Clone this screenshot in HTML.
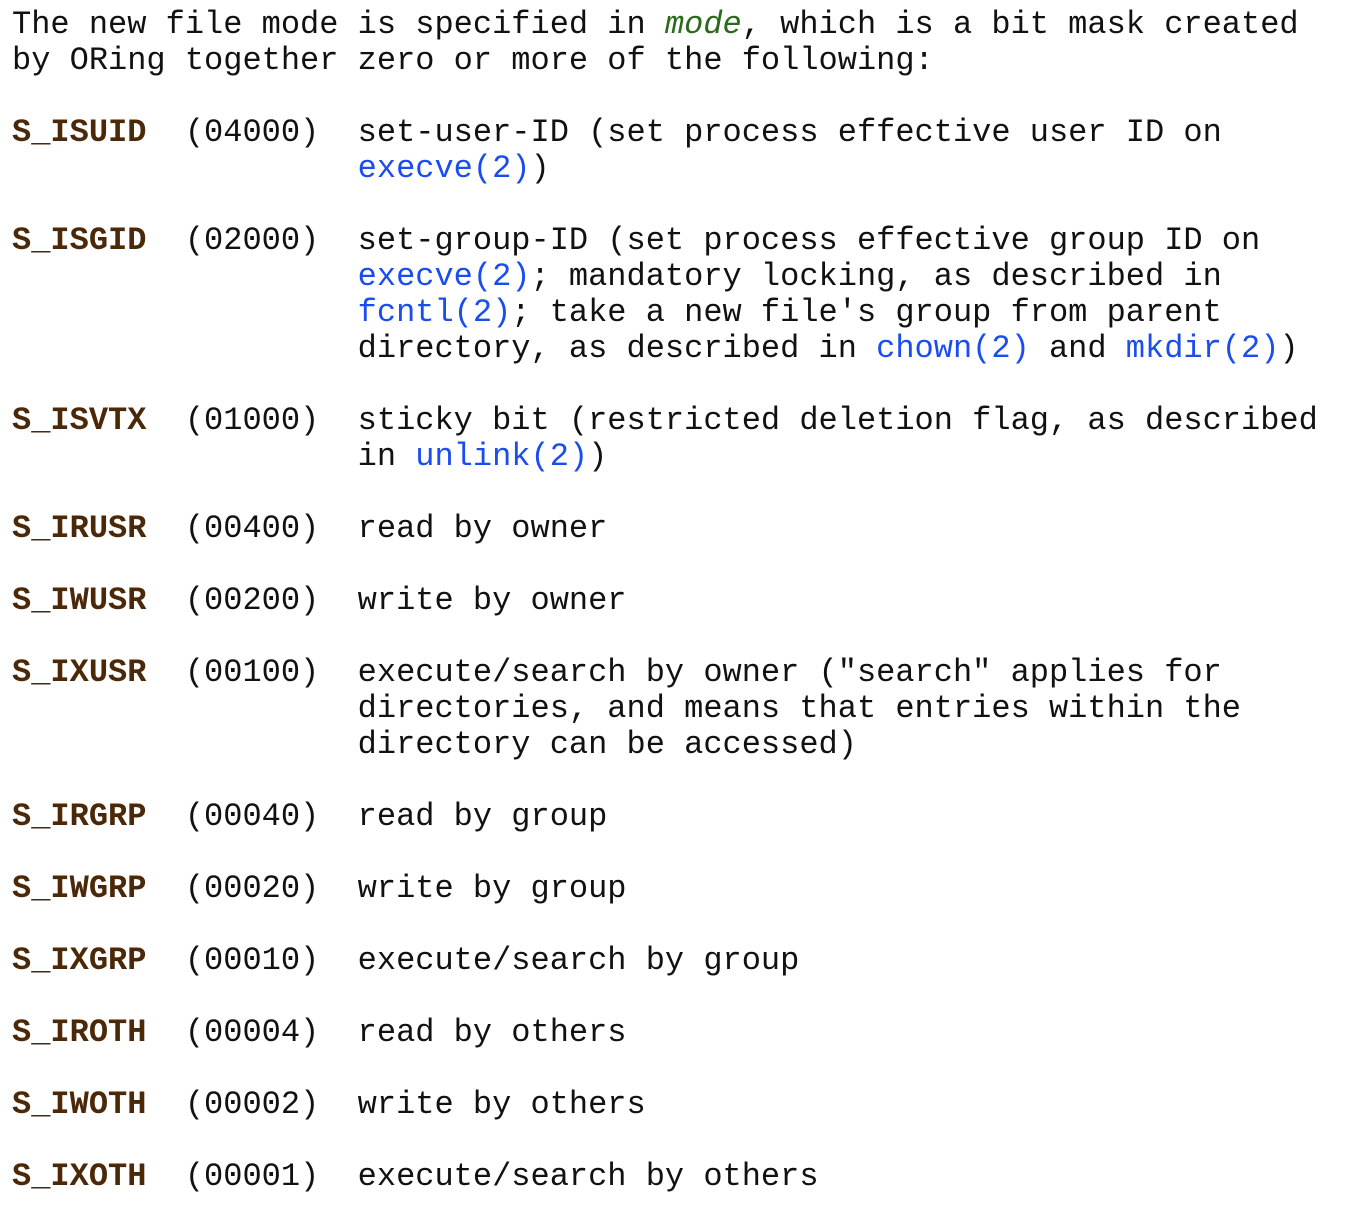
<!DOCTYPE html>
<html><head><meta charset="utf-8"><style>
html,body{margin:0;padding:0;background:#fff;}
pre{margin:0;padding:7px 0 0 12px;font-family:"Liberation Mono",monospace;font-size:32px;line-height:36px;color:#111;}
b{color:#4a2808;font-weight:bold;}
a{color:#1a4cf2;text-decoration:none;}
i{color:#2a6a1a;}
</style></head><body><pre>The new file mode is specified in <i>mode</i>, which is a bit mask created
by ORing together zero or more of the following:

<b>S_ISUID</b>  (04000)  set-user-ID (set process effective user ID on
                  <a>execve(2)</a>)

<b>S_ISGID</b>  (02000)  set-group-ID (set process effective group ID on
                  <a>execve(2)</a>; mandatory locking, as described in
                  <a>fcntl(2)</a>; take a new file's group from parent
                  directory, as described in <a>chown(2)</a> and <a>mkdir(2)</a>)

<b>S_ISVTX</b>  (01000)  sticky bit (restricted deletion flag, as described
                  in <a>unlink(2)</a>)

<b>S_IRUSR</b>  (00400)  read by owner

<b>S_IWUSR</b>  (00200)  write by owner

<b>S_IXUSR</b>  (00100)  execute/search by owner ("search" applies for
                  directories, and means that entries within the
                  directory can be accessed)

<b>S_IRGRP</b>  (00040)  read by group

<b>S_IWGRP</b>  (00020)  write by group

<b>S_IXGRP</b>  (00010)  execute/search by group

<b>S_IROTH</b>  (00004)  read by others

<b>S_IWOTH</b>  (00002)  write by others

<b>S_IXOTH</b>  (00001)  execute/search by others
</pre></body></html>
